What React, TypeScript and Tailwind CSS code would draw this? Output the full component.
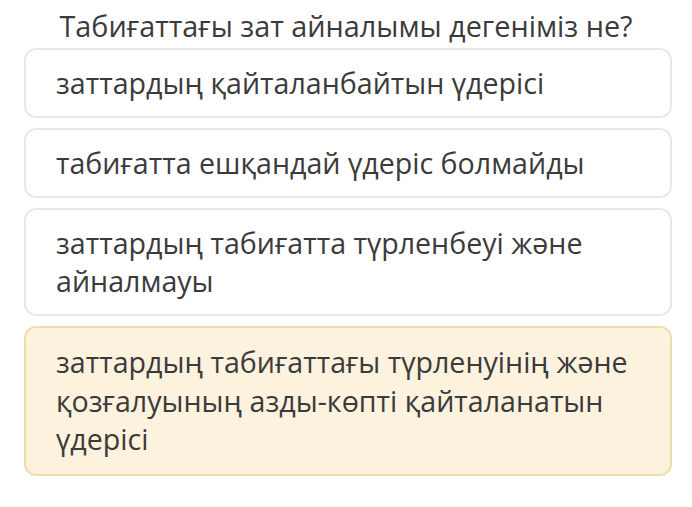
const OPTIONS = [
  { text: 'заттардың қайталанбайтын үдерісі', selected: false },
  { text: 'табиғатта ешқандай үдеріс болмайды', selected: false },
  { text: 'заттардың табиғатта түрленбеуі және айналмауы', selected: false },
  {
    text: 'заттардың табиғаттағы түрленуінің және қозғалуының азды-көпті қайталанатын үдерісі',
    selected: true,
  },
];

export default function App() {
  return (
    <div className="w-[692px] h-[507px] bg-white overflow-hidden font-['Open_Sans',sans-serif] text-[#3b3b3b]">
      <h1 className="pt-[4px] text-center text-[28.8px] leading-[44px]">
        Табиғаттағы зат айналымы дегеніміз не?
      </h1>
      <div className="flex flex-col gap-[10px] pl-[24px] pr-[20px]">
        {OPTIONS.map((o) => (
          <div
            key={o.text}
            className={`rounded-[12px] border-2 px-[30px] text-[28.6px] ${
              o.selected
                ? 'bg-[#fcf2dd] border-[#efdcae] py-[15px] leading-[38.5px]'
                : 'bg-white border-[#e8e8e8] py-[14px] leading-[38px]'
            }`}
          >
            {o.text}
          </div>
        ))}
      </div>
    </div>
  );
}
